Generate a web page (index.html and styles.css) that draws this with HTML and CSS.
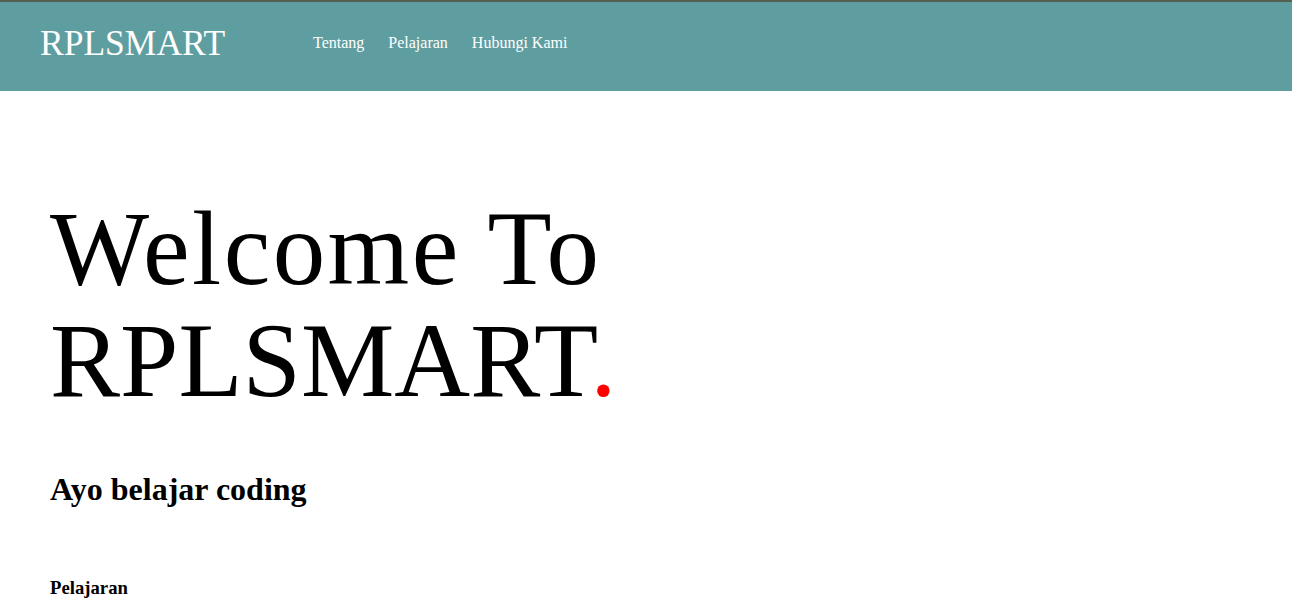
FILE: index.html
```html
<!DOCTYPE html>
<html lang="id">
<head>
<meta charset="utf-8">
<title>RPLSMART</title>
<link rel="stylesheet" href="styles.css">
</head>
<body>
<header class="topbar">
  <div class="logo">RPLSMART</div>
  <nav class="menu">
    <a href="#">Tentang</a>
    <a href="#">Pelajaran</a>
    <a href="#">Hubungi Kami</a>
  </nav>
</header>
<main class="content">
  <h1 class="hero"><span class="hero-line1">Welcome To</span><br>RPLSMART<span class="dot">.</span></h1>
  <h2 class="tagline">Ayo belajar coding</h2>
  <h3 class="section-title">Pelajaran</h3>
</main>
</body>
</html>
```
FILE: styles.css
```css
html, body {
  margin: 0;
  padding: 0;
  background: #ffffff;
  font-family: "Liberation Serif", "Times New Roman", serif;
  color: #000;
}
.topbar {
  box-sizing: border-box;
  height: 91px;
  border-top: 2px solid #575e52;
  background: #5f9ea0;
  display: flex;
  align-items: center;
  padding-left: 40px;
  padding-bottom: 8px;
}
.logo {
  color: #fff;
  font-size: 35.5px;
  line-height: 1;
  width: 273px;
  padding-top: 2px;
}
.menu {
  display: flex;
  gap: 24px;
}
.menu a {
  color: #fff;
  text-decoration: none;
  font-size: 16px;
}
.content {
  padding: 0 50px;
}
.hero {
  margin: 102px 0 0 0;
  font-weight: normal;
  font-size: 105px;
  line-height: 112px;
}
.hero-line1 {
  letter-spacing: 2.4px;
}
.dot {
  color: #ff0000;
}
.tagline {
  margin: 54px 0 0 0;
  font-size: 32px;
  font-weight: bold;
}
.section-title {
  margin: 69px 0 0 0;
  font-size: 18.72px;
  font-weight: bold;
}
```
